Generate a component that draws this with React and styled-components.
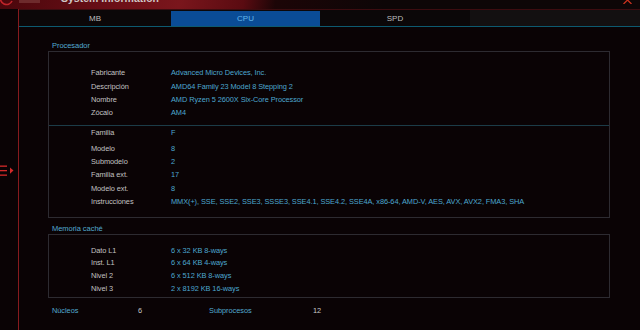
import styled, { createGlobalStyle } from "styled-components"

const GlobalStyle = createGlobalStyle`
    html, body {
        margin: 0;
        padding: 0;
        background: #0a0305;
    }
    #root {
        width: 640px;
        height: 330px;
        overflow: hidden;
    }
`

const procesador = [
    ["Fabricante", "Advanced Micro Devices, Inc."],
    ["Descripción", "AMD64 Family 23 Model 8 Stepping 2"],
    ["Nombre", "AMD Ryzen 5 2600X Six-Core Processor"],
    ["Zócalo", "AM4"],
]

const familia = [
    ["Familia", "F"],
    ["Modelo", "8"],
    ["Submodelo", "2"],
    ["Familia ext.", "17"],
    ["Modelo ext.", "8"],
    ["Instrucciones", "MMX(+), SSE, SSE2, SSE3, SSSE3, SSE4.1, SSE4.2, SSE4A, x86-64, AMD-V, AES, AVX, AVX2, FMA3, SHA"],
]

const cache = [
    ["Dato L1", "6 x 32 KB 8-ways"],
    ["Inst. L1", "6 x 64 KB 4-ways"],
    ["Nivel 2", "6 x 512 KB 8-ways"],
    ["Nivel 3", "2 x 8192 KB 16-ways"],
]

export default function App(){
    return (
        <Page>
            <GlobalStyle />
            <TitleBar>
                <svg width="14" height="9" viewBox="0 0 14 9">
                    <path d="M1 -4 A6 6 0 0 0 12 1" fill="none" stroke="#c0242a" strokeWidth="1.6" />
                    <path d="M6 -2 L11 -2" stroke="#c0242a" strokeWidth="1.2" />
                </svg>
                <Badge />
                <Title>System Information</Title>
                <Close>
                    <svg width="9" height="4" viewBox="0 0 9 4">
                        <polyline points="0.5,4 4.5,0 8.5,4" fill="none" stroke="#c8321e" strokeWidth="1.3" />
                    </svg>
                </Close>
            </TitleBar>
            <Main>
                <Sidebar>
                    <svg width="14" height="11" viewBox="0 0 14 11">
                        <rect x="0" y="0.5" width="7" height="1.3" fill="#d42a2a" />
                        <rect x="0" y="5" width="7" height="1.3" fill="#d42a2a" />
                        <rect x="0" y="9.5" width="7" height="1.3" fill="#d42a2a" />
                        <polygon points="10,2.5 13.5,5.6 10,8.7" fill="#d42a2a" />
                    </svg>
                </Sidebar>
                <Content>
                    <Tabs>
                        <Tab>MB</Tab>
                        <Tab active>CPU</Tab>
                        <Tab>SPD</Tab>
                        <Tab filler />
                    </Tabs>
                    <Panel>
                        <SectionTitle>Procesador</SectionTitle>
                        <Box>
                            <Group top>
                                {procesador.map(([k, v]) => (
                                    <Row key={k}><Label>{k}</Label><Value>{v}</Value></Row>
                                ))}
                            </Group>
                            <Divider />
                            <Group bottom>
                                {familia.map(([k, v], i) => (
                                    <Row key={k} spaced={i === 0}><Label>{k}</Label><Value>{v}</Value></Row>
                                ))}
                            </Group>
                        </Box>
                        <SectionTitle cache>Memoria caché</SectionTitle>
                        <Box>
                            <Group cache>
                                {cache.map(([k, v]) => (
                                    <Row key={k} tight><Label>{k}</Label><Value>{v}</Value></Row>
                                ))}
                            </Group>
                        </Box>
                        <Summary>
                            <SummaryKey>Núcleos</SummaryKey>
                            <SummaryValue>6</SummaryValue>
                            <SummaryKey>Subprocesos</SummaryKey>
                            <SummaryValue>12</SummaryValue>
                        </Summary>
                    </Panel>
                </Content>
            </Main>
        </Page>
    )
}

const Page = styled.div`
    width: 640px;
    height: 330px;
    display: flex;
    flex-direction: column;
    background: #0a0305;
    font-family: "Liberation Sans", Arial, sans-serif;
    overflow: hidden;
`

const TitleBar = styled.div`
    height: 9px;
    flex-shrink: 0;
    display: flex;
    align-items: flex-start;
    overflow: hidden;
    background: linear-gradient(100deg, #4a070c 0%, #6c0f17 18%, #7a161c 28%, #5a0b11 38%, #1c0507 43%, #0d0607 60%, #0d0607 100%);

    svg {
        display: block;
    }
`

const Badge = styled.div`
    width: 21px;
    height: 3px;
    margin-left: 5px;
    background: #6e2a2c;
`

const Title = styled.div`
    margin-left: 21px;
    margin-top: -7px;
    font-size: 10.5px;
    line-height: 10px;
    font-weight: 700;
    color: #cfc6c6;
    white-space: nowrap;
`

const Close = styled.div`
    margin-left: auto;
    margin-right: 8px;
`

const Main = styled.div`
    flex: 1;
    display: flex;
    min-height: 0;
`

const Sidebar = styled.div`
    width: 18px;
    flex-shrink: 0;
    border-right: 1px solid #861a1e;
    display: flex;
    align-items: center;
    padding-top: 2px;
    box-sizing: content-box;

    svg {
        display: block;
    }
`

const Content = styled.div`
    flex: 1;
    display: flex;
    flex-direction: column;
    border-top: 1px solid #3c0c10;
`

const Tabs = styled.div`
    display: grid;
    grid-template-columns: 152px 149px 150px 1fr;
    height: 16px;
    border-bottom: 1px solid #0d5a70;
    background: #0b0708;
`

const Tab = styled.div`
    display: flex;
    align-items: center;
    justify-content: center;
    font-size: 8px;
    color: ${p => p.active ? "#63b8ec" : "#bdbdbd"};
    background: ${p => p.active ? "#0a4c96" : p.filler ? "#131011" : "#0b0708"};
    margin-top: ${p => p.active ? "1px" : "0"};
`

const Panel = styled.div`
    flex: 1;
    display: flex;
    flex-direction: column;
    padding: 0 30px 0 29px;
`

const SectionTitle = styled.div`
    height: 10px;
    line-height: 10px;
    margin-top: ${p => p.cache ? "6px" : "14px"};
    padding-left: 4px;
    font-size: 7.5px;
    letter-spacing: -0.05px;
    color: #52aad0;
`

const Box = styled.div`
    border: 1px solid #2d2b31;
`

const Group = styled.div`
    padding-left: 42px;
    padding-top: ${p => p.top ? "14.3px" : p.cache ? "9.6px" : "0"};
    padding-bottom: ${p => p.bottom ? "8.5px" : p.cache ? "1.6px" : "0"};
    margin-bottom: ${p => p.top ? "5.4px" : "0"};
`

const Divider = styled.div`
    height: 1px;
    background: #1c3c48;
`

const Row = styled.div`
    display: grid;
    grid-template-columns: 80px 1fr;
    height: ${p => p.tight ? "12.7px" : "13.33px"};
    line-height: ${p => p.tight ? "12.7px" : "13.33px"};
    margin-bottom: ${p => p.spaced ? "2.5px" : "0"};
    font-size: 7.4px;
    letter-spacing: -0.08px;
    white-space: nowrap;
`

const Label = styled.span`
    color: #c2c2c2;
`

const Value = styled.span`
    color: #4ca7d0;
`

const Summary = styled.div`
    display: grid;
    grid-template-columns: 86px 71px 104px auto;
    margin-top: 8px;
    padding-left: 4px;
    height: 10px;
    line-height: 10px;
    font-size: 7.4px;
    letter-spacing: -0.05px;
`

const SummaryKey = styled.span`
    color: #52aad0;
`

const SummaryValue = styled.span`
    color: #c8c8c8;
`
